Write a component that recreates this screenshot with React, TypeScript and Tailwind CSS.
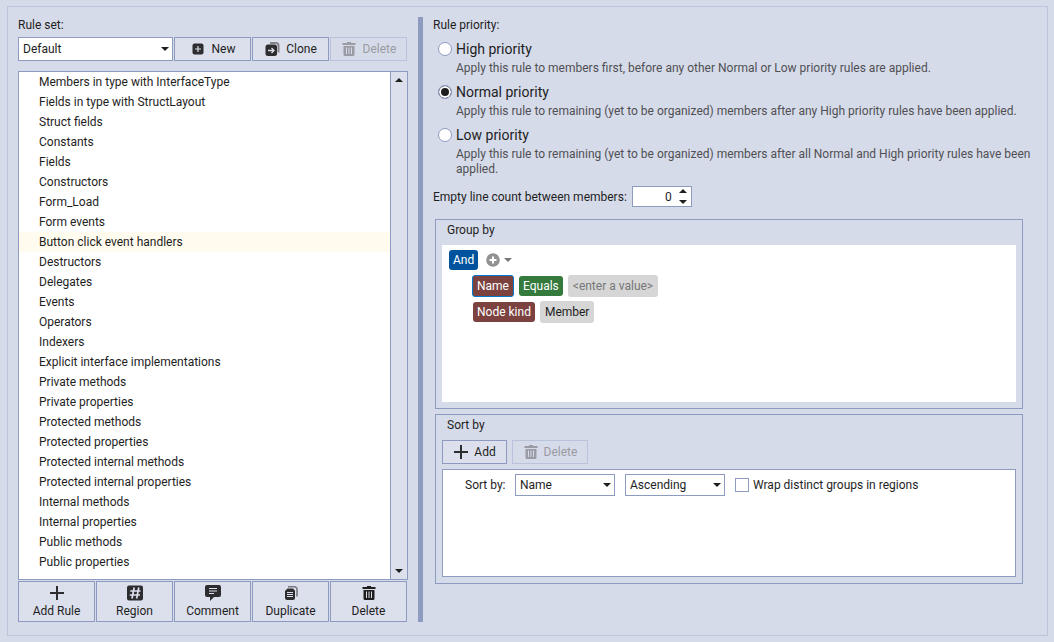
import { useState } from "react";
import type { ReactNode } from "react";

const RULES = [
  "Members in type with InterfaceType",
  "Fields in type with StructLayout",
  "Struct fields",
  "Constants",
  "Fields",
  "Constructors",
  "Form_Load",
  "Form events",
  "Button click event handlers",
  "Destructors",
  "Delegates",
  "Events",
  "Operators",
  "Indexers",
  "Explicit interface implementations",
  "Private methods",
  "Private properties",
  "Protected methods",
  "Protected properties",
  "Protected internal methods",
  "Protected internal properties",
  "Internal methods",
  "Internal properties",
  "Public methods",
  "Public properties",
];

const PRIORITIES = [
  {
    id: "high",
    title: "High priority",
    text: "Apply this rule to members first, before any other Normal or Low priority rules are applied.",
  },
  {
    id: "normal",
    title: "Normal priority",
    text: "Apply this rule to remaining (yet to be organized) members after any High priority rules have been applied.",
  },
  {
    id: "low",
    title: "Low priority",
    text: "Apply this rule to remaining (yet to be organized) members after all Normal and High priority rules have been applied.",
  },
];

const PlusIcon = (): JSX.Element => (
  <svg width="16" height="16" viewBox="0 0 16 16" aria-hidden="true">
    <path d="M7 1h2v6h6v2H9v6H7V9H1V7h6z" fill="#2d2d30" />
  </svg>
);

const TrashIcon = (): JSX.Element => (
  <svg width="16" height="16" viewBox="0 0 16 16" aria-hidden="true">
    <path
      d="M6 1h4v1h4.500v2h-13V2H6zM2.500 5h11v8.500a1.500 1.500 0 0 1-1.500 1.500H4a1.500 1.500 0 0 1-1.500-1.500zM5 6.500V13h1V6.500zm2.500 0V13h1V6.500zm2.500 0V13h1V6.500z"
      fill="currentColor"
      fillRule="evenodd"
    />
  </svg>
);

const NewIcon = (): JSX.Element => (
  <svg width="16" height="16" viewBox="0 0 16 16" aria-hidden="true">
    <rect x="2.500" y="2.500" width="11" height="11" rx="2" fill="#2d2d30" />
    <path d="M8 5v6M5 8h6" stroke="#dce0ec" strokeWidth="1.200" />
  </svg>
);

const CloneIcon = (): JSX.Element => (
  <svg width="16" height="16" viewBox="0 0 16 16" aria-hidden="true">
    <path d="M6 2h6a2.500 2.500 0 0 1 2.500 2.500V11.500" fill="none" stroke="#85868b" strokeWidth="2" />
    <rect x="1.500" y="3.500" width="11.500" height="11.500" rx="2.500" fill="#2d2d30" />
    <path d="M4 9.500h6M7.500 7l2.500 2.500L7.500 12" fill="none" stroke="#dce0ec" strokeWidth="1.300" />
  </svg>
);

const RegionIcon = (): JSX.Element => (
  <svg width="16" height="16" viewBox="0 0 16 16" aria-hidden="true">
    <rect x="0" y="0.500" width="16" height="15" rx="2" fill="#2d2d30" />
    <path d="M7.200 2.500L5 13.500M11.800 2.500L9.600 13.500M3.200 6h10.300M2.700 10h10.300" stroke="#dce0ec" strokeWidth="1.700" />
  </svg>
);

const CommentIcon = (): JSX.Element => (
  <svg width="16" height="16" viewBox="0 0 16 16" aria-hidden="true">
    <path
      d="M2 0h12a2 2 0 0 1 2 2v8a2 2 0 0 1-2 2H9l-4 4v-4H2a2 2 0 0 1-2-2V2a2 2 0 0 1 2-2z"
      fill="#2d2d30"
    />
    <path d="M4 3.500h8M4 6h8M4 8.500h5" stroke="#dce0ec" />
  </svg>
);

const DuplicateIcon = (): JSX.Element => (
  <svg width="16" height="16" viewBox="0 0 16 16" aria-hidden="true">
    <path d="M5 1.800h6.500A2.500 2.500 0 0 1 14 4.300V11.500" fill="none" stroke="#77787d" strokeWidth="1.600" />
    <path
      d="M4.500 3.500h5.500l2 2V13a2 2 0 0 1-2 2H4a2 2 0 0 1-2-2V6z"
      fill="#2d2d30"
    />
    <path d="M4 7.500h6M4 9.500h6M4 11.500h6" stroke="#dce0ec" />
  </svg>
);

const Triangle = ({ up = false, className = "" }: { up?: boolean; className?: string }): JSX.Element => (
  <svg width="8" height="4" viewBox="0 0 8 4" className={className} aria-hidden="true">
    <path d={up ? "M0 4l4-4 4 4z" : "M0 0h8L4 4z"} fill="currentColor" />
  </svg>
);

const Select = ({
  id,
  options,
  className,
}: {
  id: string;
  options: string[];
  className: string;
}): JSX.Element => (
  <div className={`relative ${className}`}>
    <select
      id={id}
      aria-label={id}
      className="h-full w-full appearance-none border border-[#8e9bc0] bg-white pr-4 pl-1"
    >
      {options.map((option) => (
        <option key={option}>{option}</option>
      ))}
    </select>
    <Triangle className="pointer-events-none absolute top-1/2 right-1 -mt-0.5" />
  </div>
);

const ToolButton = ({
  icon,
  label,
  disabled = false,
  className = "",
}: {
  icon: ReactNode;
  label: string;
  disabled?: boolean;
  className?: string;
}): JSX.Element => (
  <button
    type="button"
    disabled={disabled}
    className={`flex h-6 items-center justify-center border ${
      disabled
        ? "border-[#bac2dc] text-[#9a9ba3]"
        : "border-[#8e9bc0] bg-[#dce0ec] hover:bg-[#fdf4bf]"
    } ${className}`}
  >
    {icon}
    {label}
  </button>
);

const StackedButton = ({ icon, label }: { icon: ReactNode; label: string }): JSX.Element => (
  <button
    type="button"
    className="flex h-[41px] flex-col items-center justify-between border border-[#8e9bc0] bg-[#dce0ec] pt-[3px] pb-0.5 leading-4 hover:bg-[#fdf4bf]"
  >
    {icon}
    {label}
  </button>
);

const RulePanel = (): JSX.Element => {
  const [selected, setSelected] = useState(8);

  return (
    <section className="flex w-[390px] shrink-0 flex-col">
      <label htmlFor="Rule set" className="leading-4">
        Rule set:
      </label>
      <div className="mt-1 mr-px grid grid-cols-5 gap-px">
        <Select id="Rule set" options={["Default"]} className="col-span-2 h-6" />
        <ToolButton icon={<NewIcon />} label="New" className="gap-1.5" />
        <ToolButton icon={<CloneIcon />} label="Clone" className="gap-1.5" />
        <ToolButton icon={<TrashIcon />} label="Delete" disabled className="gap-1.5" />
      </div>
      <div className="mt-2.5 flex grow border border-[#8e9bc0] bg-white">
        <ul role="listbox" aria-label="Rules" className="grow">
          {RULES.map((rule, index) => (
            <li
              key={rule}
              role="option"
              aria-selected={index === selected}
              onClick={(): void => setSelected(index)}
              className={`h-5 pl-5 leading-5 ${index === selected ? "bg-[#fffcef]" : ""}`}
            >
              {rule}
            </li>
          ))}
        </ul>
        <div className="flex w-[17px] flex-col justify-between border-l border-[#8e9bc0]">
          <button type="button" aria-label="Scroll up" className="flex h-4 items-center justify-center bg-[#dce0ec]">
            <Triangle up />
          </button>
          <div className="grow bg-[#dce0ec]" />
          <button type="button" aria-label="Scroll down" className="flex h-4 items-center justify-center bg-[#dce0ec]">
            <Triangle />
          </button>
        </div>
      </div>
      <div className="mt-px mr-px grid grid-cols-5 gap-px">
        <StackedButton icon={<PlusIcon />} label="Add Rule" />
        <StackedButton icon={<RegionIcon />} label="Region" />
        <StackedButton icon={<CommentIcon />} label="Comment" />
        <StackedButton icon={<DuplicateIcon />} label="Duplicate" />
        <StackedButton icon={<TrashIcon />} label="Delete" />
      </div>
    </section>
  );
};

const PriorityOptions = (): JSX.Element => {
  const [priority, setPriority] = useState("normal");

  return (
    <div role="radiogroup" aria-label="Rule priority" className="mt-1.5 flex flex-col gap-1.5 pl-[5px]">
      {PRIORITIES.map(({ id, title, text }) => (
        <div key={id}>
          <label className="flex h-5 items-center gap-1 text-sm">
            <input
              type="radio"
              name="priority"
              checked={priority === id}
              onChange={(): void => setPriority(id)}
              className="size-3.5 appearance-none rounded-full border border-[#8e9bc0] bg-white checked:bg-[#1e1e1e] checked:shadow-[inset_0_0_0_2px_white]"
            />
            {title}
          </label>
          <p className="pt-0.5 pl-[18px] leading-[15px] text-[#505054]">{text}</p>
        </div>
      ))}
    </div>
  );
};

const GroupBy = (): JSX.Element => (
  <section className="mt-3 mr-4 ml-0.5 flex h-[190px] flex-col border border-[#8e9bc0] px-1.5 pb-1.5">
    <h2 className="pt-px pb-[5px] pl-[5px] leading-[19px]">Group by</h2>
    <div className="flex grow flex-col bg-white px-[7px] pt-1">
      <div className="flex h-[22px] items-center gap-2">
        <button type="button" className="h-5 rounded-[3px] bg-[#00539c] px-1 text-white">
          And
        </button>
        <button type="button" aria-label="Add condition" className="flex items-center gap-1 text-[#777777]">
          <svg width="14" height="14" viewBox="0 0 14 14" aria-hidden="true">
            <circle cx="7" cy="7" r="6.800" fill="#929292" />
            <path d="M7 3.500v7M3.500 7h7" stroke="#fff" strokeWidth="2" />
          </svg>
          <Triangle />
        </button>
      </div>
      <div className="mt-1 flex h-[22px] items-center gap-[5px] pl-[23px]">
        <button type="button" className="h-[22px] rounded-[3px] border border-[#007acc] bg-[#7b4240] px-1 text-white">
          Name
        </button>
        <button type="button" className="h-5 rounded-[3px] bg-[#337a3c] px-1 text-white">
          Equals
        </button>
        <button type="button" className="h-[22px] rounded-[3px] bg-[#d6d6d6] px-[5px] text-[#777777]">
          &lt;enter a value&gt;
        </button>
      </div>
      <div className="mt-1 flex h-[22px] items-center gap-[5px] pl-6">
        <button type="button" className="h-5 rounded-[3px] bg-[#7b4240] px-1 text-white">
          Node kind
        </button>
        <button type="button" className="h-[22px] rounded-[3px] bg-[#d6d6d6] px-[5px]">
          Member
        </button>
      </div>
    </div>
  </section>
);

const SortBy = (): JSX.Element => (
  <section className="mt-[5px] mr-4 ml-0.5 flex h-[170px] flex-col border border-[#8e9bc0] px-1.5 pb-1.5">
    <h2 className="pt-px pb-[5px] pl-[5px] leading-[19px]">Sort by</h2>
    <div className="flex gap-[5px]">
      <ToolButton icon={<PlusIcon />} label="Add" className="w-[65px] gap-[5px]" />
      <ToolButton icon={<TrashIcon />} label="Delete" disabled className="w-[76px] gap-[5px]" />
    </div>
    <div className="mt-[5px] grow border border-[#8e9bc0] bg-white pt-1 pl-[22px]">
      <div className="flex items-center gap-2.5">
        <label htmlFor="Sort by" className="w-10 whitespace-nowrap">
          Sort by:
        </label>
        <Select id="Sort by" options={["Name", "Kind", "Access"]} className="h-[22px] w-[100px]" />
        <Select id="Sort direction" options={["Ascending", "Descending"]} className="h-[22px] w-[100px]" />
        <label className="flex items-center gap-1">
          <input
            type="checkbox"
            className="size-3.5 appearance-none border border-[#8e9bc0] bg-white checked:bg-[#1e1e1e] checked:shadow-[inset_0_0_0_2px_white]"
          />
          Wrap distinct groups in regions
        </label>
      </div>
    </div>
  </section>
);

const RuleDetails = (): JSX.Element => {
  const [lines, setLines] = useState(0);

  return (
    <section className="min-w-0 grow">
      <h2 className="leading-4">Rule priority:</h2>
      <PriorityOptions />
      <div className="mt-[9px] flex items-center gap-[5px]">
        <label htmlFor="empty-lines">Empty line count between members:</label>
        <div className="flex h-[21px] w-[60px] border border-[#8e9bc0] bg-white">
          <input
            id="empty-lines"
            type="text"
            inputMode="numeric"
            value={lines}
            onChange={(event): void => setLines(Number(event.target.value) || 0)}
            className="w-[39px] text-right outline-none"
          />
          <div className="flex grow flex-col items-center justify-between py-0.5 pl-1">
            <button type="button" aria-label="Increase" onClick={(): void => setLines(lines + 1)}>
              <Triangle up className="block" />
            </button>
            <button
              type="button"
              aria-label="Decrease"
              onClick={(): void => setLines(Math.max(0, lines - 1))}
            >
              <Triangle className="block" />
            </button>
          </div>
        </div>
      </div>
      <GroupBy />
      <SortBy />
    </section>
  );
};

const App = (): JSX.Element => (
  <main className="flex min-h-screen bg-[#d6dbe9] py-1.5 pr-1.5 pl-[7px] font-[Roboto,sans-serif] text-xs text-[#1e1e1e]">
    <div className="flex grow gap-2.5 border border-[#bdc5da] py-2.5 pr-2 pb-[13px] pl-2.5">
      <RulePanel />
      <div className="w-[5px] shrink-0 bg-[#8e9bc0]" />
      <RuleDetails />
    </div>
  </main>
);

export default App;
